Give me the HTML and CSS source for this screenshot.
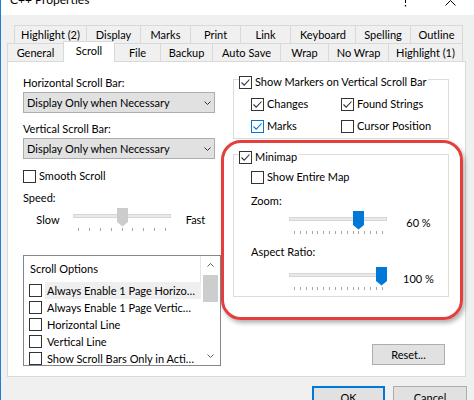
FILE: index.html
```html
<!DOCTYPE html>
<html>
<head>
<meta charset="utf-8">
<link rel="stylesheet" href="styles.css">
</head>
<body>
<div class="window">
  <div class="titlebar">
    <span class="title">C++ Properties</span>
    <svg class="help" width="3" height="7" viewBox="0 0 3 7"><rect x="1" y="0" width="1" height="3" fill="#000"/><rect x="0.8" y="5" width="1.4" height="1.4" fill="#000"/></svg>
    <svg class="close" width="11" height="6" viewBox="0 0 11 6"><polyline points="0.5,5.5 5.5,0.5 10.5,5.5" fill="none" stroke="#000" stroke-width="1"/></svg>
  </div>

  <div class="tabs">
    <div class="tabrow back">
      <div class="tab w72">Highlight (2)</div>
      <div class="tab w54">Display</div>
      <div class="tab w50">Marks</div>
      <div class="tab w50">Print</div>
      <div class="tab w50">Link</div>
      <div class="tab w65">Keyboard</div>
      <div class="tab w55">Spelling</div>
      <div class="tab w53 last">Outline</div>
    </div>
    <div class="tabrow front">
      <div class="tab w56">General</div>
      <div class="tab w51 sel">Scroll</div>
      <div class="tab w46">File</div>
      <div class="tab w52">Backup</div>
      <div class="tab w68">Auto Save</div>
      <div class="tab w48">Wrap</div>
      <div class="tab w60">No Wrap</div>
      <div class="tab w75 last">Highlight (1)</div>
    </div>
  </div>

  <div class="panel">
    <div class="cols">
      <div class="left">
        <div class="lbl">Horizontal Scroll Bar:</div>
        <div class="select"><span>Display Only when Necessary</span><svg width="7" height="4" viewBox="0 0 7 4"><polyline points="0.5,0.5 3.5,3.5 6.5,0.5" fill="none" stroke="#333" stroke-width="1"/></svg></div>
        <div class="lbl mt9">Vertical Scroll Bar:</div>
        <div class="select"><span>Display Only when Necessary</span><svg width="7" height="4" viewBox="0 0 7 4"><polyline points="0.5,0.5 3.5,3.5 6.5,0.5" fill="none" stroke="#333" stroke-width="1"/></svg></div>
        <div class="check mt10"><span class="cb"></span>Smooth Scroll</div>
        <div class="lbl mt8">Speed:</div>
        <div class="srow">
          <span class="end">Slow</span>
          <div class="slider">
            <div class="track"></div>
            <div class="ticks t88"><i></i><i></i><i></i><i></i><i></i><i></i><i></i><i></i><i></i></div>
            <svg class="thumb" style="left:44px" width="11" height="19" viewBox="0 0 11 19"><polygon points="0,0 11,0 11,14 5.5,18.5 0,14" fill="#cccccc"/></svg>
          </div>
          <span class="end end2">Fast</span>
        </div>
        <div class="listbox">
          <div class="lb-main">
            <div class="lb-head">Scroll Options</div>
            <div class="lb-row"><span class="cb"></span><span class="txt hl">Always Enable 1 Page Horizo…</span></div>
            <div class="lb-row"><span class="cb"></span><span class="txt">Always Enable 1 Page Vertic…</span></div>
            <div class="lb-row"><span class="cb"></span><span class="txt">Horizontal Line</span></div>
            <div class="lb-row"><span class="cb"></span><span class="txt">Vertical Line</span></div>
            <div class="lb-row"><span class="cb"></span><span class="txt">Show Scroll Bars Only in Acti…</span></div>
          </div>
          <div class="lb-scroll">
            <div class="arrow"><svg width="7" height="4" viewBox="0 0 7 4"><polyline points="0.5,3.5 3.5,0.5 6.5,3.5" fill="none" stroke="#606060" stroke-width="1"/></svg></div>
            <div class="sthumb"></div>
            <div class="spacer"></div>
            <div class="arrow"><svg width="7" height="4" viewBox="0 0 7 4"><polyline points="0.5,0.5 3.5,3.5 6.5,0.5" fill="none" stroke="#606060" stroke-width="1"/></svg></div>
          </div>
        </div>
      </div>

      <div class="right">
        <div class="group g1">
          <div class="gtitle"><span class="cb"><svg width="11" height="11" viewBox="0 0 11 11"><path d="M1.5 5.5 4.2 8.2 9.5 2.5" fill="none" stroke="#333" stroke-width="1.1"/></svg></span>Show Markers on Vertical Scroll Bar</div>
          <div class="opts">
            <div class="check"><span class="cb"><svg width="11" height="11" viewBox="0 0 11 11"><path d="M1.5 5.5 4.2 8.2 9.5 2.5" fill="none" stroke="#333" stroke-width="1.1"/></svg></span>Changes</div>
            <div class="check"><span class="cb"><svg width="11" height="11" viewBox="0 0 11 11"><path d="M1.5 5.5 4.2 8.2 9.5 2.5" fill="none" stroke="#333" stroke-width="1.1"/></svg></span>Found Strings</div>
            <div class="check"><span class="cb hover"><svg width="11" height="11" viewBox="0 0 11 11"><path d="M1.5 5.5 4.2 8.2 9.5 2.5" fill="none" stroke="#0078d7" stroke-width="1.1"/></svg></span>Marks</div>
            <div class="check"><span class="cb"></span>Cursor Position</div>
          </div>
        </div>
        <div class="group g2">
          <div class="gtitle"><span class="cb"><svg width="11" height="11" viewBox="0 0 11 11"><path d="M1.5 5.5 4.2 8.2 9.5 2.5" fill="none" stroke="#333" stroke-width="1.1"/></svg></span>Minimap</div>
          <div class="check ind mt6"><span class="cb"></span>Show Entire Map</div>
          <div class="lbl ind mt10">Zoom:</div>
          <div class="srow ind2">
            <div class="slider">
              <div class="track"></div>
              <div class="ticks t89"><i></i><i></i><i></i><i></i><i></i><i></i><i></i><i></i><i></i><i></i><i></i><i></i><i></i><i></i><i></i><i></i></div>
              <svg class="thumb" style="left:64px" width="11" height="19" viewBox="0 0 11 19"><polygon points="0,0 11,0 11,14 5.5,18.5 0,14" fill="#0078d7"/></svg>
            </div>
            <span class="pct">60 %</span>
          </div>
          <div class="lbl ind mt9">Aspect Ratio:</div>
          <div class="srow ind2 mt5">
            <div class="slider">
              <div class="track"></div>
              <div class="ticks t89"><i></i><i></i><i></i><i></i><i></i><i></i><i></i><i></i><i></i><i></i><i></i><i></i><i></i><i></i><i></i><i></i></div>
              <svg class="thumb" style="left:87px" width="11" height="19" viewBox="0 0 11 19"><polygon points="0,0 11,0 11,14 5.5,18.5 0,14" fill="#0078d7"/></svg>
            </div>
            <span class="pct">100 %</span>
          </div>
        </div>
        <button class="btn reset">Reset...</button>
      </div>
    </div>
    <div class="annot"></div>
  </div>

  <div class="footer">
    <button class="btn ok">OK</button>
    <button class="btn cancel">Cancel</button>
  </div>
</div>
</body>
</html>
```

FILE: styles.css
```css
* { box-sizing: border-box; }

body {
  margin: 0;
  font: 11px/14px Lato, "Liberation Sans", sans-serif;
  color: #000;
}

.window {
  width: 474px;
  height: 400px;
  overflow: hidden;
  background: #f0f0f0;
  border-left: 1px solid #1c7fd6;
}

/* title bar */
.titlebar {
  height: 15px;
  background: #fff;
  display: flex;
  align-items: flex-start;
  overflow: hidden;
}
.title {
  font-size: 12px;
  line-height: 14px;
  margin: -7px 0 0 9px;
  white-space: nowrap;
}
.help { margin-left: auto; display: block; }
.close { margin-left: 38px; margin-right: 18px; display: block; }

/* tabs */
.tabs { margin-top: 10px; }
.tabrow {
  display: flex;
  height: 18px;
  align-items: flex-start;
}
.tabrow.back { margin-left: 13px; }
.tabrow.front { margin-left: 6px; }
.tab {
  height: 18px;
  border-top: 1px solid #d9d9d9;
  border-left: 1px solid #d9d9d9;
  display: flex;
  justify-content: center;
  align-items: center;
  padding-top: 1px;
  white-space: nowrap;
  flex: none;
}
.tab.last { border-right: 1px solid #d9d9d9; }
.tab.sel {
  background: #fff;
  height: 21px;
  margin-top: -2px;
  position: relative;
  z-index: 1;
  align-items: flex-start;
  padding-top: 2px;
}
.w46 { width: 46px; }
.w48 { width: 48px; }
.w50 { width: 50px; }
.w51 { width: 51px; }
.w52 { width: 52px; }
.w53 { width: 53px; }
.w54 { width: 54px; }
.w55 { width: 55px; }
.w56 { width: 56px; }
.w60 { width: 60px; }
.w65 { width: 65px; }
.w68 { width: 68px; }
.w72 { width: 72px; }
.w75 { width: 75px; }

/* panel */
.panel {
  position: relative;
  margin-left: 6px;
  width: 459px;
  height: 316px;
  border: 1px solid #d9d9d9;
  background: #fff;
  padding: 14px 0 0 15px;
}
.cols {
  display: grid;
  grid-template-columns: 198px 216px;
  column-gap: 12px;
  align-items: start;
}

.mt5 { margin-top: 5px; }
.mt6 { margin-top: 6px; }
.mt8 { margin-top: 8px; }
.mt9 { margin-top: 9px; }
.mt10 { margin-top: 10px; }

.lbl { height: 14px; white-space: nowrap; }

.select {
  display: flex;
  align-items: center;
  justify-content: space-between;
  width: 192px;
  height: 21px;
  margin-top: 2px;
  background: #e1e1e1;
  border: 1px solid #adadad;
  padding: 0 3px;
  white-space: nowrap;
}
.select svg { display: block; }

.check {
  display: flex;
  align-items: center;
  gap: 3px;
  height: 14px;
  white-space: nowrap;
}
.cb {
  width: 13px;
  height: 13px;
  border: 1px solid #333;
  background: #fff;
  flex: none;
  display: flex;
}
.cb svg { display: block; }
.cb.hover { border-color: #0078d7; }

/* sliders */
.srow { display: flex; }
.end { width: 50px; text-align: center; padding-top: 8px; }
.end2 { width: 49px; }
.slider {
  position: relative;
  width: 98px;
  height: 28px;
  flex: none;
}
.track {
  margin-top: 9px;
  height: 4px;
  background: #e7eaea;
  border: 1px solid #d6d6d6;
}
.ticks {
  display: flex;
  justify-content: space-between;
  margin: 10px 0 0 5px;
  height: 3px;
}
.ticks.t88 { width: 88px; }
.ticks.t89 { width: 89px; }
.ticks i { width: 1px; background: #a6a6a6; }
.thumb { position: absolute; top: 3px; display: block; }

/* list box */
.listbox {
  margin-top: 22px;
  width: 198px;
  height: 111px;
  border: 1px solid #828790;
  display: flex;
  background: #fff;
  overflow: hidden;
}
.lb-main { width: 177px; flex: none; }
.lb-head {
  height: 26px;
  line-height: 26px;
  padding-left: 6px;
  border-right: 1px solid #e5e5e5;
}
.lb-row {
  height: 17px;
  display: flex;
  align-items: center;
}
.lb-row .cb { margin-left: 5px; }
.lb-row .txt {
  margin-left: 3px;
  padding-left: 2px;
  flex: 1;
  line-height: 17px;
  height: 17px;
  white-space: nowrap;
  overflow: hidden;
}
.lb-row .hl { background: #efefef; }
.lb-scroll {
  width: 19px;
  display: flex;
  flex-direction: column;
  align-items: center;
}
.arrow {
  height: 18px;
  width: 100%;
  display: flex;
  align-items: center;
  justify-content: center;
}
.arrow svg { display: block; }
.sthumb { width: 15px; height: 27px; background: #cdcdcd; margin-top: 1px; }
.spacer { flex: 1; }

/* right column */
.right {
  margin-top: 3px;
  display: flex;
  flex-direction: column;
}
.group {
  border: 1px solid #dcdcdc;
  padding-bottom: 5px;
}
.group.g2 { margin-top: 15px; padding-bottom: 4px; }
.gtitle {
  display: flex;
  align-items: center;
  gap: 3px;
  width: max-content;
  height: 14px;
  margin: -5px 0 0 5px;
  padding-right: 2px;
  background: #fff;
  white-space: nowrap;
}
.opts {
  display: grid;
  grid-template-columns: 90px auto;
  row-gap: 8px;
  padding-left: 17px;
  margin-top: 8px;
}
.ind { margin-left: 17px; }
.ind2 { margin-left: 55px; }
.pct {
  width: 37px;
  margin-left: 13px;
  text-align: center;
  padding-top: 8px;
  white-space: nowrap;
}

/* buttons */
.btn {
  height: 23px;
  background: #e1e1e1;
  border: 1px solid #adadad;
  font: inherit;
  color: #000;
  padding: 0;
}
.reset {
  width: 73px;
  height: 21px;
  align-self: flex-end;
  margin-top: 47px;
  margin-right: 4px;
}
.footer {
  display: flex;
  justify-content: flex-end;
  gap: 8px;
  margin-top: 9px;
  padding-right: 7px;
}
.ok { width: 73px; border: 2px solid #0078d7; }
.cancel { width: 74px; }

/* annotation overlay */
.annot {
  position: absolute;
  left: 213px;
  top: 78px;
  width: 242px;
  height: 180px;
  border: 3px solid #e3403d;
  border-radius: 20px;
  box-shadow: 2px 3px 4px rgba(0, 0, 0, 0.3);
  pointer-events: none;
}
```
